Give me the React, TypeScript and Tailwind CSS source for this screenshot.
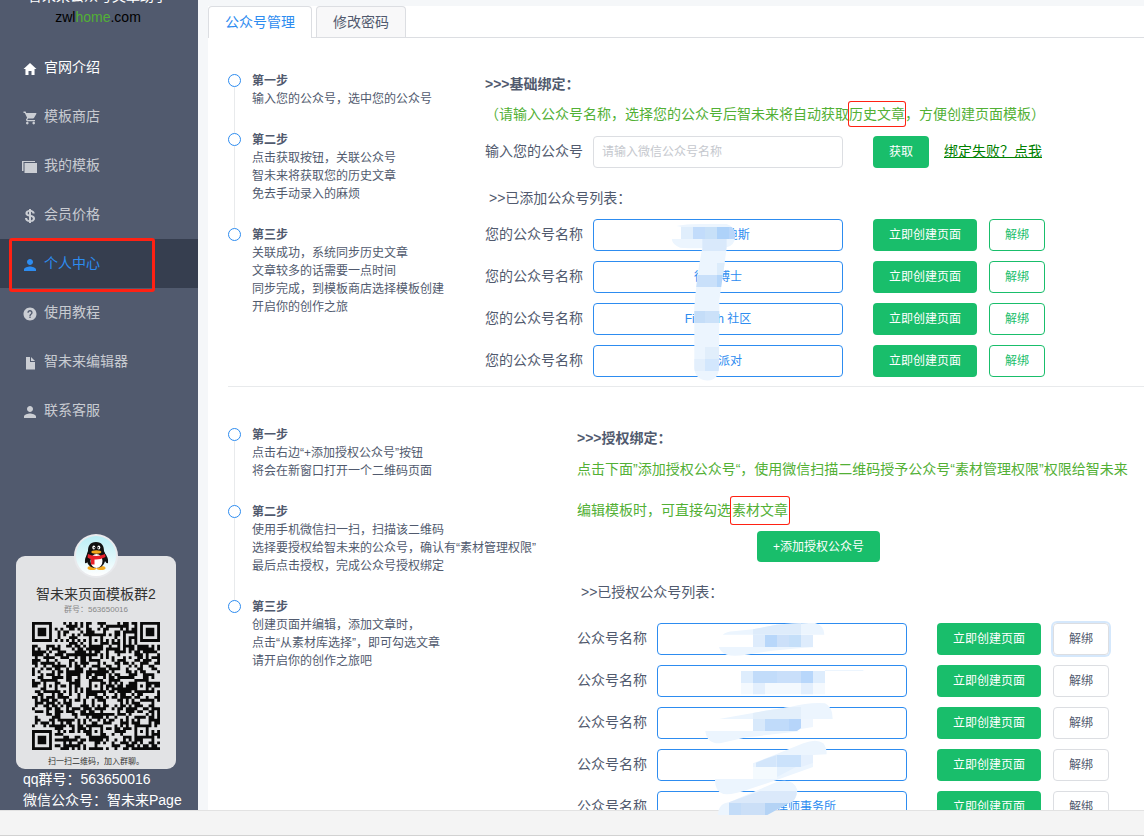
import React from 'react';
import { IoLogoUsd, IoMdCart, IoMdHelpCircle, IoMdHome, IoMdPerson } from 'react-icons/io';

interface IconProps {
  className?: string;
}

interface MenuItem {
  label: string;
  icon: React.ComponentType<IconProps>;
  state?: 'active' | 'bright';
}

interface Step {
  title: string;
  lines: string[];
}

const PhotosIcon: React.FC<IconProps> = ({ className }) => (
  <svg viewBox="0 0 16 16" fill="currentColor" className={className} aria-hidden="true">
    <path d="M0 2h13v1H1.500v9H0z" />
    <path d="M2.500 4H15v10H2.500z" />
  </svg>
);

const DocumentIcon: React.FC<IconProps> = ({ className }) => (
  <svg viewBox="0 0 16 16" fill="currentColor" className={className} aria-hidden="true">
    <path d="M4 2h4v5h5v7.500H4z" />
    <path d="M9 2l4 4H9z" />
  </svg>
);

const MENU: MenuItem[] = [
  { label: '官网介绍', icon: IoMdHome, state: 'bright' },
  { label: '模板商店', icon: IoMdCart },
  { label: '我的模板', icon: PhotosIcon },
  { label: '会员价格', icon: IoLogoUsd },
  { label: '个人中心', icon: IoMdPerson, state: 'active' },
  { label: '使用教程', icon: IoMdHelpCircle },
  { label: '智未来编辑器', icon: DocumentIcon },
  { label: '联系客服', icon: IoMdPerson },
];

const BASIC_STEPS: Step[] = [
  { title: '第一步', lines: ['输入您的公众号，选中您的公众号'] },
  { title: '第二步', lines: ['点击获取按钮，关联公众号', '智未来将获取您的历史文章', '免去手动录入的麻烦'] },
  {
    title: '第三步',
    lines: ['关联成功，系统同步历史文章', '文章较多的话需要一点时间', '同步完成，到模板商店选择模板创建', '开启你的创作之旅'],
  },
];

const AUTH_STEPS: Step[] = [
  { title: '第一步', lines: ['点击右边“+添加授权公众号”按钮', '将会在新窗口打开一个二维码页面'] },
  {
    title: '第二步',
    lines: ['使用手机微信扫一扫，扫描该二维码', '选择要授权给智未来的公众号，确认有“素材管理权限”', '最后点击授权，完成公众号授权绑定'],
  },
  { title: '第三步', lines: ['创建页面并编辑，添加文章时，', '点击“从素材库选择”，即可勾选文章', '请开启你的创作之旅吧'] },
];

// Ideographic spaces stand for the characters hidden by the masks
const BASIC_ACCOUNTS = ['　　　 迪斯', '徐　博士', 'Fintech 社区', '　　派对'];
const AUTH_ACCOUNTS = ['', '', '', '', '　　　　律师事务所'];

// QR version 7: 45 modules, alignment patterns centred on 6 / 22 / 38
const QR_SIZE = 45;
const QR_ALIGN = [[22, 6], [6, 22], [22, 22], [38, 22], [22, 38], [38, 38]];

const buildQrPath = () => {
  let seed = 563650016;
  let path = '';
  for (let y = 0; y < QR_SIZE; y++) {
    for (let x = 0; x < QR_SIZE; x++) {
      seed = (Math.imul(seed, 1664525) + 1013904223) >>> 0;
      let dark = seed / 4294967296 < 0.52;
      if (x === 6 || y === 6) dark = (x + y) % 2 === 0;
      for (const [ax, ay] of QR_ALIGN) {
        const d = Math.max(Math.abs(x - ax), Math.abs(y - ay));
        if (d <= 2) dark = d !== 1;
      }
      for (const [fx, fy] of [[3, 3], [41, 3], [3, 41]]) {
        const d = Math.max(Math.abs(x - fx), Math.abs(y - fy));
        if (d <= 4) dark = d === 3 || d <= 1;
      }
      if (dark) path += `M${x} ${y}h1v1h-1z`;
    }
  }
  return path;
};

const QR_PATH = buildQrPath();

const Penguin: React.FC = () => (
  <svg viewBox="0 0 44 44" className="h-11 w-11" aria-hidden="true">
    <defs>
      <linearGradient id="avatar" x1="0" y1="0" x2="0" y2="1">
        <stop offset="0" stopColor="#b9eef5" />
        <stop offset="1" stopColor="#ffffff" />
      </linearGradient>
    </defs>
    <circle cx="22" cy="22" r="22" fill="#e9eaed" />
    <circle cx="22" cy="22" r="20" fill="url(#avatar)" />
    <ellipse cx="18" cy="34" rx="4.500" ry="2" fill="#f5a81c" />
    <ellipse cx="27" cy="34" rx="4.500" ry="2" fill="#f5a81c" />
    <path d="M15 18q-5 6-4 11q2 1 4-4zM30 18q5 6 4 11q-2 1-4-4z" fill="#111" />
    <path d="M22 8c-6 0-8 4-8 9c-3 6-2 17 8 17s11-11 8-17c0-5-2-9-8-9z" fill="#111" />
    <ellipse cx="22.500" cy="27" rx="6" ry="7" fill="#fff" />
    <ellipse cx="19.800" cy="13.500" rx="1.500" ry="2" fill="#fff" />
    <ellipse cx="24.800" cy="13.500" rx="1.500" ry="2" fill="#fff" />
    <circle cx="20.300" cy="13.800" r=".8" fill="#111" />
    <circle cx="24.300" cy="13.800" r=".8" fill="#111" />
    <ellipse cx="22.300" cy="18" rx="5" ry="1.700" fill="#f5a81c" />
    <path d="M14 20q8 4 17 0l.5 3q-6 3-11 2.500v5h-3.500v-5.500q-2-.5-3.500-1.500z" fill="#e8202a" />
  </svg>
);

const GroupCard: React.FC = () => (
  <figure className="ml-4 flex w-40 flex-col items-center rounded-[9px] bg-[#e2e3e5] text-[#333]">
    <div className="-mt-[22px]">
      <Penguin />
    </div>
    <p className="mt-1 text-sm leading-6">智未来页面模板群2</p>
    <p className="text-[8px] leading-2 text-[#888]">群号：563650016</p>
    <svg viewBox="0 0 45 45" className="mt-2 h-32 w-32" role="img" aria-label="QR">
      <path d={QR_PATH} fill="#0a0a0a" />
    </svg>
    <figcaption className="mt-1 text-[8px] leading-[15px]">扫一扫二维码，加入群聊。</figcaption>
  </figure>
);

const Sidebar: React.FC = () => (
  <aside className="flex w-[198px] shrink-0 flex-col bg-[#515a6e]">
    <header className="-mt-[15px] pr-0.5 text-center text-sm">
      <p className="leading-[22px] text-white">智未来公众号文章助手</p>
      <p className="leading-[21px] text-black">
        zwl<span className="text-[#52b035]">home</span>.com
      </p>
    </header>
    <nav className="mt-[15px]">
      {MENU.map(({ label, icon: Icon, state }) => (
        <a
          key={label}
          href="#"
          className={`relative flex h-[49px] items-center gap-1.5 pb-0.5 pl-[22px] text-sm ${
            state === 'active' ? 'bg-[#363e4f] text-[#2d8cf0]' : state === 'bright' ? 'text-white' : 'text-white/70'
          }`}
        >
          <Icon className="mt-1 h-4 w-4" />
          {label}
          {state === 'active' && (
            <span className="absolute -top-px left-[9px] h-[54px] w-[146px] rounded-[3px] border-3 border-[#ff2113]" />
          )}
        </a>
      ))}
    </nav>
    <div className="mt-auto -mb-px">
      <GroupCard />
      <div className="pl-[23px] text-sm leading-[21px] whitespace-nowrap text-white">
        <p>qq群号：563650016</p>
        <p>微信公众号：智未来Page</p>
      </div>
    </div>
  </aside>
);

const Timeline: React.FC<{ steps: Step[] }> = ({ steps }) => (
  <ol className="text-xs leading-[18px]">
    {steps.map((step, index) => (
      <li key={step.title} className="flex gap-[11px]">
        <div className="flex flex-col items-center">
          <span className="mt-1 h-[13px] w-[13px] rounded-full border border-[#2d8cf0]" />
          {index < steps.length - 1 && <span className="-mb-1 w-px flex-1 bg-[#e8eaec]" />}
        </div>
        <div className="pt-0.5 pb-[21px] whitespace-nowrap">
          <h4 className="font-bold">{step.title}</h4>
          {step.lines.map((line) => (
            <p key={line}>{line}</p>
          ))}
        </div>
      </li>
    ))}
  </ol>
);

const Highlight: React.FC<{ size: 'sm' | 'lg'; children: React.ReactNode }> = ({ size, children }) => (
  <span
    className={`inline-block rounded-[2px] ring-1 ring-[#ff2113] ${size === 'lg' ? 'px-px leading-[27px]' : 'leading-6'}`}
  >
    {children}
  </span>
);

const AccountRow: React.FC<{ label: string; name: string; tone: 'green' | 'plain'; focused?: boolean }> = ({
  label,
  name,
  tone,
  focused,
}) => (
  <li className="flex items-center">
    <span className={`pb-0.5 text-sm ${tone === 'green' ? 'w-27' : 'w-20'}`}>{label}</span>
    <button className="h-8 w-[250px] rounded border border-[#2d8cf0] text-xs whitespace-pre text-[#2d8cf0]">
      {name}
    </button>
    <button className="ml-7.5 h-8 w-26 rounded bg-[#19be6b] text-xs text-white">立即创建页面</button>
    <button
      className={`ml-3 h-8 w-14 rounded border text-xs ${
        tone === 'green' ? 'border-[#19be6b] text-[#19be6b]' : 'border-[#dcdee2]'
      } ${focused ? 'ring-2 ring-[#2d8cf0]/20' : ''}`}
    >
      解绑
    </button>
  </li>
);

const BasicMask: React.FC = () => (
  <svg viewBox="39 27 750 474" className="pointer-events-none absolute top-0 left-27 h-[158px] w-[250px] overflow-visible">
    <defs>
      <clipPath id="basic-mask">
        <path d="M275 87H303V50L290 48Q330 40 440 42Q466 50 466 80Q464 105 440 112L434 159L418 270L417 475Q414 512 382 512Q346 510 343 475V290Q352 180 367 115Q320 115 300 113Q278 105 275 87Z" />
      </clipPath>
    </defs>
    <g clipPath="url(#basic-mask)">
      <path d="M270 30h210v490H270z" fill="#ecf5fe" />
      <path d="M303 51h36v36h-36z" fill="#e0eefc" />
      <path d="M339 51h36v36h-36z" fill="#c2dcfb" />
      <path d="M375 51h36v36h-36z" fill="#c7e0f8" />
      <path d="M411 51h36v36h-36z" fill="#aed2f9" />
      <path d="M447 51h36v36h-36z" fill="#b8d6fa" />
      <path d="M367 87h73v36h-73z" fill="#d9e9fb" />
      <path d="M411 159h36v36h-36z" fill="#dcecfb" />
      <path d="M340 195h71v36h-71z" fill="#c9e0fa" />
      <path d="M411 195h36v36h-36z" fill="#b5d6fa" />
      <path d="M339 303h36v36h-36z" fill="#c4ddf8" />
      <path d="M375 303h48v36h-48z" fill="#cbe1f9" />
      <path d="M375 411h48v36h-48z" fill="#e1eefb" />
      <path d="M339 447h36v36h-36z" fill="#e3effc" />
      <path d="M375 447h48v36h-48z" fill="#d3e7fd" />
    </g>
  </svg>
);

const AuthMask: React.FC = () => (
  <svg viewBox="291 39 750 474" className="pointer-events-none absolute top-0 left-20 h-[158px] w-[250px] overflow-visible">
    <g fill="#ecf5fe">
      <path d="M488 74Q500 65 520 64L579 58L650 44Q700 38 765 39Q793 46 793 74Z" />
      <path d="M477 111H768Q650 118 560 134Q520 140 500 134Q480 126 477 111Z" />
      <path d="M477 327L600 305L690 291Q750 276 795 280Q818 290 818 327Z" />
      <path d="M436 363H723Q650 372 560 382L480 400Q440 402 436 363Z" />
      <path d="M579 460L650 432L730 400Q770 385 790 400Q800 412 800 433L759 435V471L650 510L560 540Q520 555 490 552Q464 545 465 507H651V471H579Z" />
      <path d="M795 180h115v3H795z" />
    </g>
    <path d="M579 58L650 44L723 40V74H579Z" fill="#deecfb" />
    <path d="M579 75h36v36h-36zM723 75h36v36h-36z" fill="#deecfc" />
    <path d="M615 75h36v36h-36z" fill="#b8d7fa" />
    <path d="M651 75h36v36h-36z" fill="#cce0f9" />
    <path d="M687 75h36v36h-36z" fill="#c5dff9" />
    <path d="M543 183h36v36h-36zM759 183h36v36h-36z" fill="#deedfd" />
    <path d="M579 183h72v36h-72z" fill="#c2dcfa" />
    <path d="M651 183h72v36h-72z" fill="#c9dffa" />
    <path d="M723 183h36v36h-36z" fill="#b8d7fb" />
    <path d="M543 219h252v34H543z" fill="#f4f9fe" />
    <path d="M579 219h36v34h-36zM723 219h36v34h-36z" fill="#e3effd" />
    <path d="M600 305L690 291H723V327H579V309Z" fill="#e3effb" />
    <path d="M579 327h36v36h-36z" fill="#d8e9fb" />
    <path d="M615 327h72v36h-72z" fill="#c0dbfa" />
    <path d="M687 327h36v28l-12 8h-24z" fill="#b6d5fa" />
    <path d="M723 327h36v24l-36 6z" fill="#eff6fe" />
    <path d="M615 447L650 435V471H588V458Z" fill="#d3e6fb" />
    <path d="M651 435h72v36h-72z" fill="#cbe2fb" />
    <path d="M723 435h36v24l-36 12z" fill="#e5f0fd" />
    <path d="M579 471h72v36h-72z" fill="#f4fafe" />
    <path d="M651 471h57l-57 30z" fill="#e3f0fd" />
  </svg>
);

// Sits on the footer edge because it covers both the last row and the footer
const EdgeMask: React.FC = () => (
  <svg viewBox="474 510 240 105" className="pointer-events-none absolute -top-[31px] left-[718px] h-[35px] w-20">
    <path d="M474 615Q475 580 507 577L650 516Q700 503 712 540Q712 570 690 577L622 615Z" fill="#ecf5fe" />
    <path d="M507 577L600 543H710Q710 570 690 579H507Z" fill="#dbe9fa" />
    <path d="M507 579h36v36h-36z" fill="#c3dcf8" />
    <path d="M543 579h72v36h-72z" fill="#cbdff7" />
    <path d="M615 579h72l-65 36h-7z" fill="#b4d3f5" />
  </svg>
);

const BasicBinding: React.FC = () => (
  <section className="flex border-b border-[#e8eaec] pt-8 pb-[9px]">
    <div className="w-[257px] shrink-0">
      <Timeline steps={BASIC_STEPS} />
    </div>
    <div className="mt-1 text-sm whitespace-nowrap">
      <h3 className="leading-5 font-bold">&gt;&gt;&gt;基础绑定：</h3>
      <p className="mt-2 leading-6 text-[#52b035]">
        （请输入公众号名称，选择您的公众号后智未来将自动获取<Highlight size="sm">历史文章</Highlight>，方便创建页面模板）
      </p>
      <form className="mt-2.5 flex items-center">
        <label htmlFor="account" className="w-27 pb-0.5">
          输入您的公众号
        </label>
        <input
          id="account"
          type="text"
          placeholder="请输入微信公众号名称"
          className="h-8 w-[250px] rounded border border-[#dcdee2] px-2 text-xs placeholder:text-[#c5c8ce]"
        />
        <button type="button" className="ml-7.5 h-8 w-14 rounded bg-[#19be6b] text-xs text-white">
          获取
        </button>
        <a href="#" className="ml-[15px] pb-0.5 text-[#008000] underline">
          绑定失败？点我
        </a>
      </form>
      <p className="mt-5 pl-1 leading-5">&gt;&gt;已添加公众号列表：</p>
      <div className="relative mt-[11px]">
        <ul className="flex flex-col gap-2.5">
          {BASIC_ACCOUNTS.map((name) => (
            <AccountRow key={name} label="您的公众号名称" name={name} tone="green" />
          ))}
        </ul>
        <BasicMask />
      </div>
    </div>
  </section>
);

const AuthBinding: React.FC = () => (
  <section className="flex pt-[37px]">
    <div className="w-[349px] shrink-0">
      <Timeline steps={AUTH_STEPS} />
    </div>
    <div className="mt-1 text-sm whitespace-nowrap">
      <h3 className="leading-5 font-bold">&gt;&gt;&gt;授权绑定：</h3>
      <p className="mt-px leading-[41px] text-[#52b035]">
        点击下面”添加授权公众号“，使用微信扫描二维码授予公众号“素材管理权限”权限给智未来
        <br />
        编辑模板时，可直接勾选<Highlight size="lg">素材文章</Highlight>
      </p>
      <button className="ml-45 block h-[31px] rounded bg-[#19be6b] px-4 text-xs text-white">+添加授权公众号</button>
      <p className="mt-5 pl-1 leading-5">&gt;&gt;已授权公众号列表：</p>
      <div className="relative mt-[21px]">
        <ul className="flex flex-col gap-2.5">
          {AUTH_ACCOUNTS.map((name, index) => (
            <AccountRow key={index} label="公众号名称" name={name} tone="plain" focused={index === 0} />
          ))}
        </ul>
        <AuthMask />
      </div>
    </div>
  </section>
);

const App: React.FC = () => (
  <div className="flex h-screen flex-col overflow-hidden bg-[#f5f7f9] font-['Liberation_Sans','Noto_Sans_CJK_SC',sans-serif] text-[#515a6e]">
    <div className="flex min-h-0 flex-1 overflow-hidden">
      <Sidebar />
      <main className="mt-1.5 ml-2.5 min-w-0 flex-1 overflow-hidden bg-white">
        <div role="tablist" className="flex h-8 gap-1 border-b border-[#dcdee2] text-sm">
          <button
            role="tab"
            aria-selected="true"
            className="-mb-px h-8 rounded-t border border-b-0 border-[#dcdee2] bg-white px-4 pb-0.5 text-[#2d8cf0]"
          >
            公众号管理
          </button>
          <button
            role="tab"
            aria-selected="false"
            className="h-[31px] rounded-t border border-b-0 border-[#dcdee2] bg-[#f8f8f9] px-4"
          >
            修改密码
          </button>
        </div>
        <div className="pl-5">
          <BasicBinding />
          <AuthBinding />
        </div>
      </main>
    </div>
    <footer className="relative h-[26px] shrink-0 border-t border-b border-t-[#e2e2e2] border-b-[#d2d2d2] bg-[#f4f4f4]">
      <EdgeMask />
    </footer>
  </div>
);

export default App;
